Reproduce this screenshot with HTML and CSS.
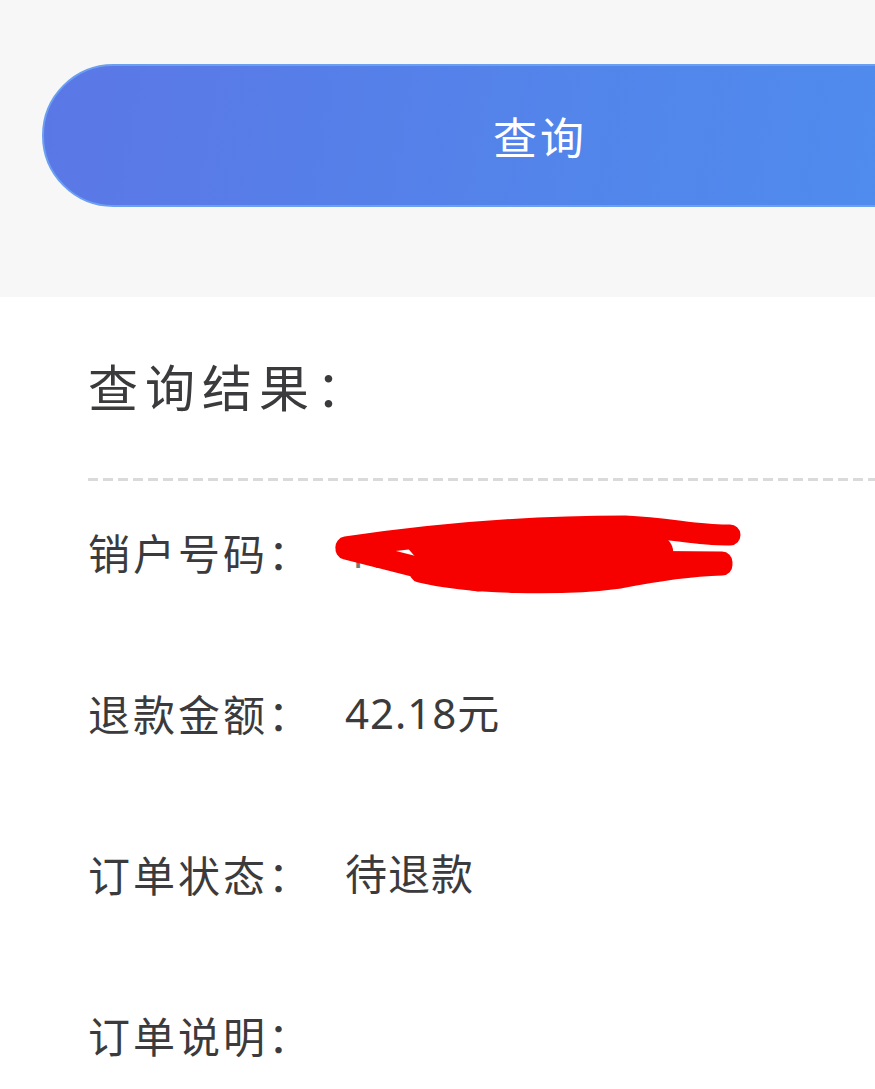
FILE: index.html
```html
<!DOCTYPE html>
<html lang="zh-CN">
<head>
    <meta charset="UTF-8">
    <meta name="viewport" content="width=device-width, initial-scale=1.0">
    <title>查询结果</title>
    <link rel="stylesheet" href="styles.css">
</head>
<body>

    <!-- Search bar -->
    <div class="search-area">
        <button class="search-btn">查询</button>
    </div>

    <!-- Result -->
    <div class="result">
        <h2 class="result-title">查询结果：</h2>
        <div class="divider"></div>

        <div class="row">
            <span class="label">销户号码：</span>
            <span class="value muted">17</span>
            <svg class="scribble" viewBox="330 505 420 95" width="420" height="95">
                <path d="M405 545 C480 530 600 524 660 534 C685 548 672 570 640 578 C580 590 490 590 430 574 Z" fill="#f70000"/>
                <g fill="none" stroke="#f70000" stroke-width="21" stroke-linecap="round" stroke-linejoin="round">
                    <path d="M346 547 C420 536 520 526 625 526 C670 528 700 536 730 535"/>
                    <path d="M346 549 C390 560 440 574 478 581"/>
                    <path d="M420 572 C470 584 560 586 620 578 C650 572 690 566 722 565"/>
                    <path d="M600 561 L722 562"/>
                </g>
            </svg>
        </div>
        <div class="row">
            <span class="label">退款金额：</span>
            <span class="value">42.18元</span>
        </div>
        <div class="row">
            <span class="label">订单状态：</span>
            <span class="value">待退款</span>
        </div>
        <div class="row">
            <span class="label">订单说明：</span>
            <span class="value"></span>
        </div>
    </div>

</body>
</html>
```

FILE: styles.css
```css
/* Page */
body {
    margin: 0;
    background-color: #fff;
    font-family: "Noto Sans", "Noto Sans CJK SC", sans-serif;
    color: #3b3b3d;
    overflow: hidden;
}

/* Search area */
.search-area {
    background-color: #f7f7f7;
    height: 297px;
    padding: 64px 0 0 42px;
    box-sizing: border-box;
    overflow: hidden;
}

.search-btn {
    display: block;
    width: 996px;
    height: 143px;
    border: 2px solid #6b9ff0;
    border-radius: 72px;
    background: linear-gradient(100deg, #5b77e6 0%, #5384ea 50%, #4e8eef 100%);
    color: #fff;
    font-family: "Noto Sans CJK SC", sans-serif;
    font-size: 44px;
    letter-spacing: 3px;
    padding: 0;
    cursor: pointer;
}

/* Result block */
.result {
    padding-left: 88px;
}

.result-title {
    margin: 0;
    padding-top: 50px;
    line-height: 76px;
    font-size: 50px;
    font-weight: normal;
    letter-spacing: 7px;
    font-family: "Noto Sans CJK SC", sans-serif;
}

.divider {
    margin-top: 55px;
    height: 3px;
    background: repeating-linear-gradient(90deg, #dadada 0 10px, transparent 10px 15px);
}

.row {
    position: relative;
    display: flex;
    height: 142px;
    line-height: 142px;
    margin-bottom: 19px;
    font-size: 42px;
}

.row .label {
    width: 257px;
    flex-shrink: 0;
    letter-spacing: 3px;
    font-family: "Noto Sans CJK SC", sans-serif;
}

.row .value {
    letter-spacing: 1px;
}

.row .muted {
    color: #777;
}

.scribble {
    position: absolute;
    left: 242px;
    top: 24px;
}
```
